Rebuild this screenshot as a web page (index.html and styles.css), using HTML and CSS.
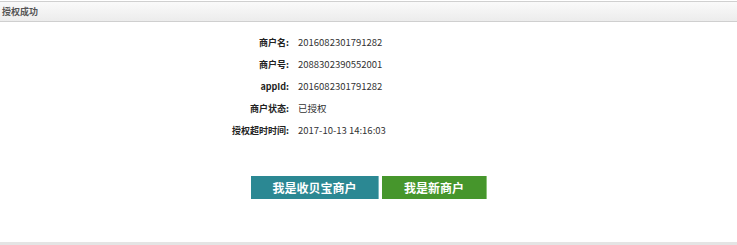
FILE: index.html
```html
<!DOCTYPE html>
<html lang="zh-CN">
<head>
<meta charset="utf-8">
<title>授权成功</title>
<link rel="stylesheet" href="styles.css">
</head>
<body>
<div class="page">
  <div class="panel-head">授权成功</div>
  <div class="panel-body">
    <div class="info">
      <div class="label">商户名:</div><div class="value">2016082301791282</div>
      <div class="label">商户号:</div><div class="value">2088302390552001</div>
      <div class="label">appId:</div><div class="value">2016082301791282</div>
      <div class="label">商户状态:</div><div class="value">已授权</div>
      <div class="label">授权超时时间:</div><div class="value">2017-10-13 14:16:03</div>
    </div>
    <div class="actions">
      <a class="btn btn-teal">我是收贝宝商户</a>
      <a class="btn btn-green">我是新商户</a>
    </div>
  </div>
  <div class="foot"></div>
</div>
</body>
</html>
```
FILE: styles.css
```css
html, body {
  margin: 0;
  padding: 0;
  background: #ffffff;
}
body {
  font-family: "Noto Sans CJK SC", "Noto Sans", sans-serif;
  color: #333;
}
.page {
  height: 245px;
  display: flex;
  flex-direction: column;
}
.panel-head {
  margin-top: 1px;
  height: 19px;
  border-top: 1px solid #d0d0d0;
  border-bottom: 1px solid #cfcfcf;
  background: linear-gradient(#fafafa, #ececec);
  font-size: 9px;
  font-weight: bold;
  color: #555;
  line-height: 19px;
  padding-left: 2px;
}
.panel-body {
  flex: 1;
  padding-top: 9px;
}
.info {
  display: grid;
  grid-template-columns: 298px auto;
  grid-auto-rows: 22px;
  align-items: center;
}
.label {
  text-align: right;
  padding-right: 9px;
  font-size: 9px;
  font-weight: bold;
  color: #222;
}
.value {
  font-size: 9.5px;
  color: #333;
}
.actions {
  display: flex;
  justify-content: center;
  gap: 3px;
  margin-top: 35px;
  padding-left: 1px;
}
.btn {
  display: flex;
  align-items: center;
  justify-content: center;
  height: 23px;
  color: #fff;
  font-size: 12px;
  font-weight: bold;
  box-sizing: border-box;
}
.btn-teal {
  width: 128px;
  background: #2b8893;
  border-right: 1px solid #7ab8c0;
}
.btn-green {
  width: 105px;
  background: #46962c;
  border-right: 1px solid #8cc47a;
}
.foot {
  height: 3px;
  background: #e4e4e4;
}
```
